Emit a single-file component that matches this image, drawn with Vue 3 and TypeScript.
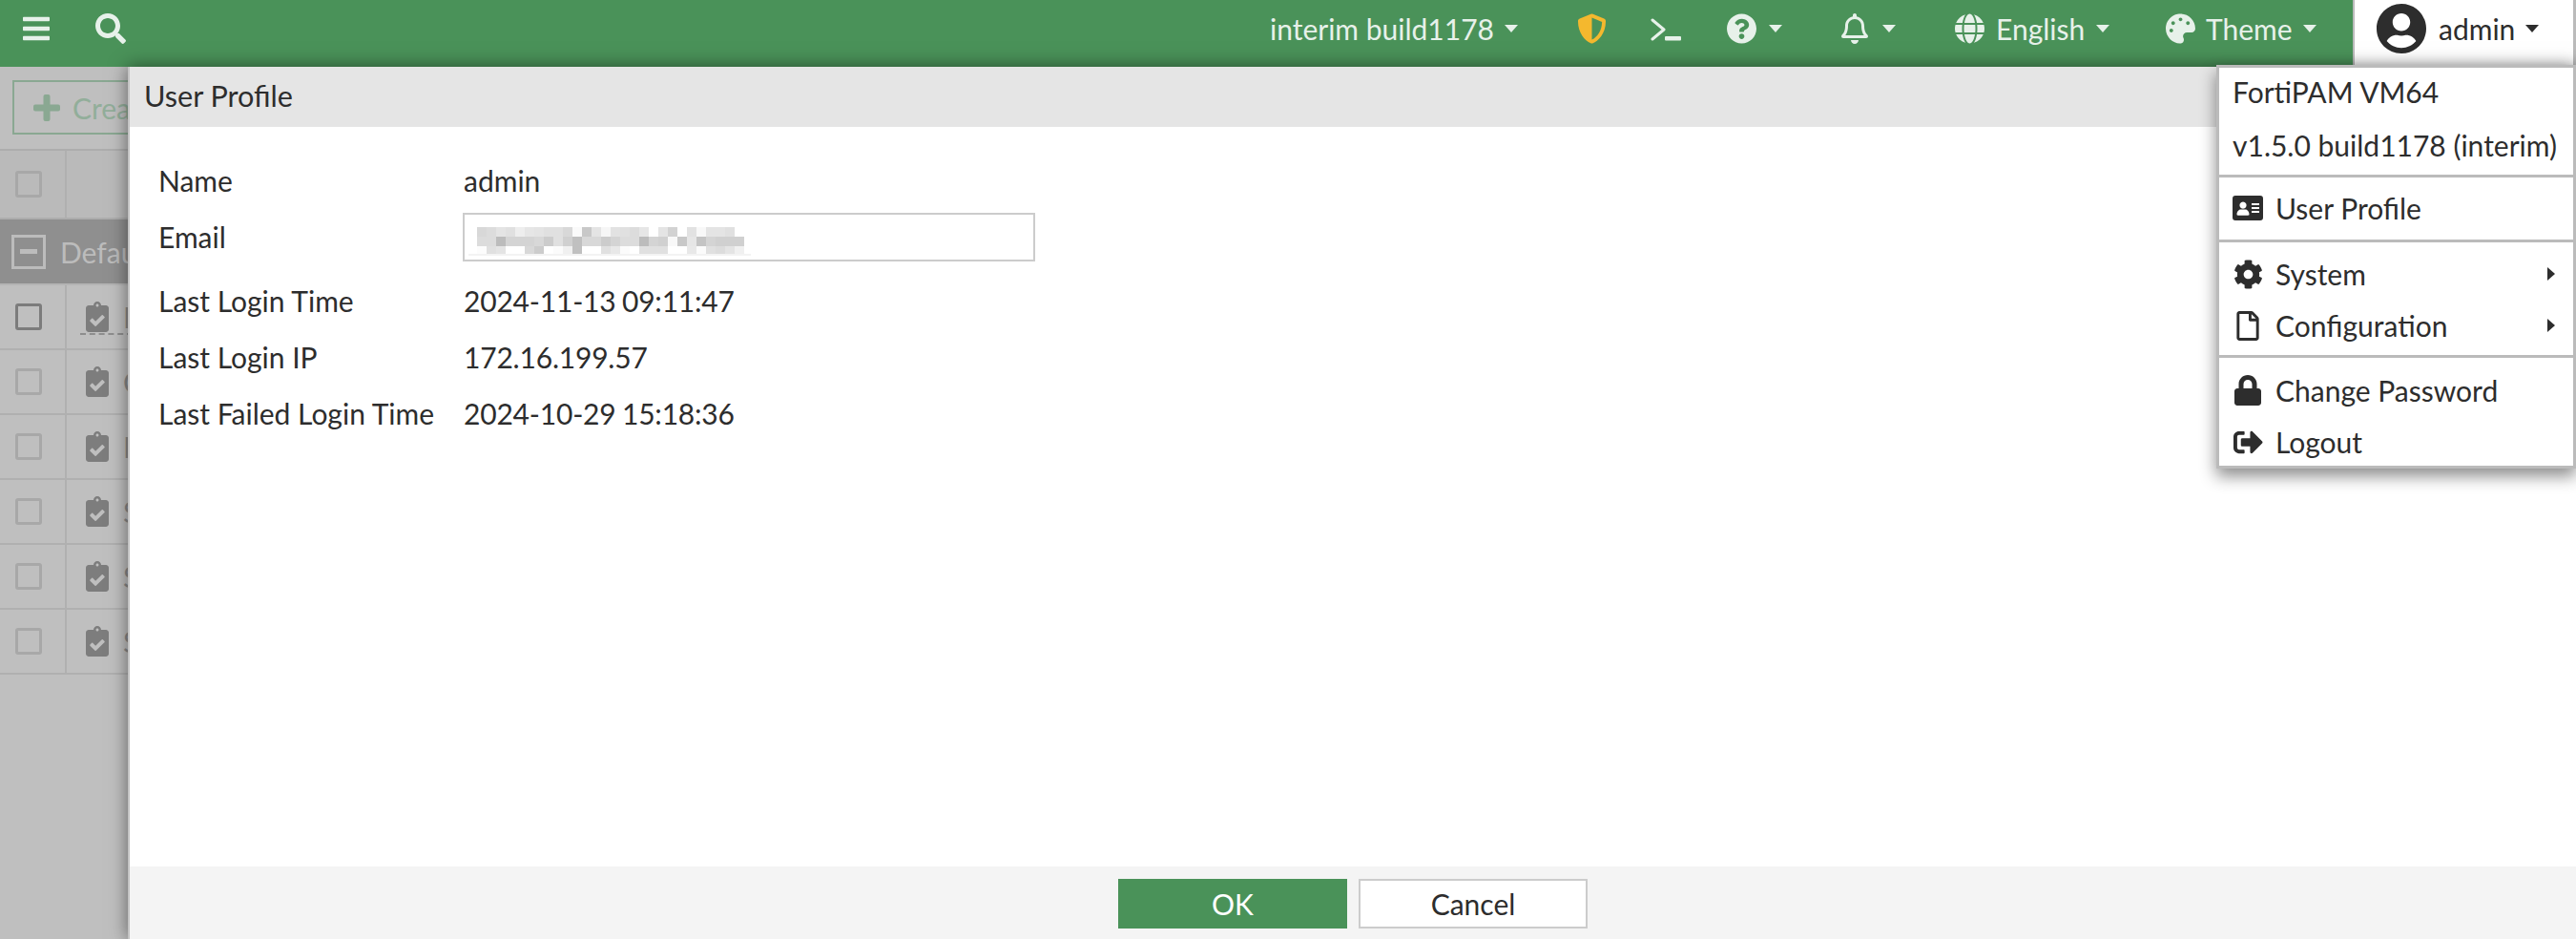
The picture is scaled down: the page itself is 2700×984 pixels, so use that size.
<script setup lang="ts">
const bgRows = [
  { t: 'Item', active: true },
  { t: 'Cert', active: false },
  { t: 'Host', active: false },
  { t: 'SSH', active: false },
  { t: 'SFTP', active: false },
  { t: 'SMB', active: false },
]
const infoTop = [{ k: 'Name', v: 'admin' }]
const infoBottom = [
  { k: 'Last Login Time', v: '2024-11-13 09:11:47' },
  { k: 'Last Login IP', v: '172.16.199.57' },
  { k: 'Last Failed Login Time', v: '2024-10-29 15:18:36' },
]
const blur: string[] = [
  'd8 dc e4 e0 ee e6 e4 e0 e0 d8 fa c8 e4 f6 e2 e0 dc e6 ff e4 d2 ff e2 f8 e4 e4 e0 ff',
  'dc dc bc d4 d4 d4 d8 cc e0 d0 c0 d8 d8 cc d4 dc dc bc d4 d0 f8 c8 e6 c4 d4 d0 d0 d0',
  'fc e0 e4 ff ff d8 cc ff fb f0 c0 ff ff e0 e8 fb ff e0 e0 e0 ff ff e8 fb e0 dc e4 f0',
]
const cells = blur.flatMap((r) => r.split(' ').map((c) => `#${c}${c}${c}`))
</script>

<template>
  <div class="page">
    <header class="topbar">
      <div class="tool tool-bars">
        <svg class="ic-bars" viewBox="0 0 448 512"><path d="M16 132h416c8.837 0 16-7.163 16-16V76c0-8.837-7.163-16-16-16H16C7.163 60 0 67.163 0 76v40c0 8.837 7.163 16 16 16zm0 160h416c8.837 0 16-7.163 16-16v-40c0-8.837-7.163-16-16-16H16c-8.837 0-16 7.163-16 16v40c0 8.837 7.163 16 16 16zm0 160h416c8.837 0 16-7.163 16-16v-40c0-8.837-7.163-16-16-16H16c-8.837 0-16 7.163-16 16v40c0 8.837 7.163 16 16 16z"/></svg>
      </div>
      <div class="tool tool-search">
        <svg class="ic-search" viewBox="0 0 512 512"><path d="M505 442.7L405.3 343c-4.5-4.5-10.6-7-17-7H372c27.6-35.3 44-79.7 44-128C416 93.1 322.9 0 208 0S0 93.1 0 208s93.1 208 208 208c48.3 0 92.7-16.4 128-44v16.3c0 6.4 2.5 12.5 7 17l99.7 99.7c9.4 9.4 24.6 9.4 33.9 0l28.3-28.3c9.4-9.4 9.4-24.6.1-34zM208 336c-70.7 0-128-57.2-128-128 0-70.7 57.2-128 128-128 70.7 0 128 57.2 128 128 0 70.7-57.2 128-128 128z"/></svg>
      </div>
      <div class="spacer"></div>
      <div class="cell w-build"><span>interim build1178</span><i class="caret"></i></div>
      <div class="cell w-shield">
        <svg class="ic-32 shield" viewBox="0 0 512 512"><path d="M466.5 83.7l-192-80a48.15 48.15 0 0 0-36.9 0l-192 80C27.7 91.1 16 108.6 16 128c0 198.5 114.5 335.7 221.5 380.3 11.8 4.9 25.1 4.9 36.9 0C360.1 472.6 496 349.3 496 128c0-19.4-11.700-36.900-29.500-44.300zM256.100 446.300l-.1-381 175.900 73.300c-3.300 151.400-82.100 261.100-175.800 307.700z"/></svg>
      </div>
      <div class="cell w-term">
        <svg class="ic-term" viewBox="0 0 32 24"><path fill="none" d="M2 2l12 10L2 22" stroke="currentColor" stroke-width="3" stroke-linecap="round" stroke-linejoin="round"/><rect x="15" y="19" width="17" height="4.500" rx="1"/></svg>
      </div>
      <div class="cell w-help">
        <svg class="ic-32" viewBox="8 8 496 496"><path d="M504 256c0 136.997-111.043 248-248 248S8 392.997 8 256C8 119.083 119.043 8 256 8s248 111.083 248 248zM262.655 90c-54.497 0-89.255 22.957-116.549 63.758-3.536 5.286-2.353 12.415 2.715 16.258l34.699 26.31c5.205 3.947 12.621 3.008 16.665-2.122 17.864-22.658 30.113-35.797 57.303-35.797 20.429 0 45.698 13.148 45.698 32.958 0 14.976-12.363 22.667-32.534 33.976C247.128 238.528 216 254.941 216 296v4c0 6.627 5.373 12 12 12h56c6.627 0 12-5.373 12-12v-1.333c0-28.462 83.186-29.647 83.186-106.667 0-58.002-60.165-102-116.531-102zM256 338c-25.365 0-46 20.635-46 46 0 25.364 20.635 46 46 46s46-20.636 46-46c0-25.365-20.635-46-46-46z"/></svg>
        <i class="caret"></i>
      </div>
      <div class="cell w-bell">
        <svg class="ic-bell" viewBox="0 0 448 512"><path d="M439.39 362.29c-19.32-20.76-55.47-51.99-55.47-154.29 0-77.7-54.48-139.9-127.94-155.16V32c0-17.67-14.32-32-31.98-32s-31.98 14.33-31.98 32v20.84C118.56 68.1 64.08 130.3 64.08 208c0 102.3-36.15 133.53-55.47 154.29-6 6.45-8.66 14.16-8.61 21.71.11 16.4 12.98 32 32.1 32h383.8c19.12 0 32-15.6 32.1-32 .05-7.55-2.61-15.27-8.61-21.71zM67.53 368c21.22-27.97 44.42-74.33 44.53-159.42 0-.2-.06-.38-.06-.58 0-61.86 50.14-112 112-112s112 50.14 112 112c0 .2-.06.38-.06.58.11 85.1 23.31 131.46 44.53 159.42H67.53zM224 512c35.32 0 63.97-28.65 63.97-64H160.03c0 35.35 28.65 64 63.97 64z"/></svg>
        <i class="caret"></i>
      </div>
      <div class="cell w-lang">
        <svg class="ic-32" viewBox="0 0 496 512"><path d="M336.5 160C322 70.7 287.8 8 248 8s-74 62.7-88.5 152h177zM152 256c0 22.2 1.2 43.5 3.3 64h185.3c2.1-20.5 3.3-41.8 3.3-64s-1.2-43.5-3.3-64H155.3c-2.1 20.5-3.3 41.8-3.3 64zm324.7-96c-28.6-67.9-86.5-120.4-158-141.6 24.4 33.8 41.2 84.7 50 141.6h108zM177.2 18.4C105.8 39.6 47.8 92.1 19.3 160h108c8.7-56.9 25.5-107.8 49.9-141.6zM487.4 192H372.7c2.1 21 3.3 42.5 3.3 64s-1.2 43-3.3 64h114.6c5.5-20.5 8.6-41.8 8.6-64s-3.1-43.5-8.5-64zM120 256c0-21.5 1.2-43 3.3-64H8.6C3.2 212.5 0 233.8 0 256s3.2 43.5 8.6 64h114.6c-2-21-3.2-42.5-3.2-64zm39.5 96c14.5 89.3 48.7 152 88.5 152s74-62.7 88.5-152h-177zm159.3 141.6c71.4-21.2 129.4-73.7 158-141.6h-108c-8.8 56.9-25.6 107.8-50 141.6zM19.3 352c28.6 67.9 86.5 120.4 158 141.6-24.4-33.8-41.2-84.7-50-141.6h-108z"/></svg>
        <span>English</span><i class="caret"></i>
      </div>
      <div class="cell w-theme">
        <svg class="ic-32" viewBox="0 0 512 512"><path d="M204.3 5C104.9 24.4 24.8 104.3 5.2 203.4c-37 187 131.7 326.4 258.8 306.7 41.2-6.4 61.4-54.6 42.5-91.7-23.1-45.4 9.9-98.4 60.9-98.4h79.7c35.8 0 64.8-29.6 64.9-65.3C511.5 97.1 368.1-26.9 204.3 5zM96 320c-17.7 0-32-14.3-32-32s14.3-32 32-32 32 14.3 32 32-14.3 32-32 32zm32-128c-17.7 0-32-14.3-32-32s14.3-32 32-32 32 14.3 32 32-14.3 32-32 32zm128-64c-17.7 0-32-14.3-32-32s14.3-32 32-32 32 14.3 32 32-14.3 32-32 32zm128 64c-17.7 0-32-14.3-32-32s14.3-32 32-32 32 14.3 32 32-14.3 32-32 32z"/></svg>
        <span>Theme</span><i class="caret"></i>
      </div>
      <div class="user">
        <svg class="avatar" viewBox="0 0 496 512"><path d="M248 8C111 8 0 119 0 256s111 248 248 248 248-111 248-248S385 8 248 8zm0 96c48.6 0 88 39.4 88 88s-39.4 88-88 88-88-39.4-88-88 39.4-88 88-88zm0 344c-58.7 0-111.3-26.6-146.5-68.2 18.8-35.4 55.6-59.8 98.5-59.8 2.4 0 4.8.4 7.1 1.1 13 4.2 26.6 6.9 40.9 6.9 14.3 0 28-2.7 40.9-6.9 2.3-.7 4.7-1.1 7.1-1.1 42.9 0 79.7 24.4 98.5 59.8C359.3 421.4 306.7 448 248 448z"/></svg>
        <span>admin</span><i class="caret dark"></i>
      </div>
    </header>

    <main class="under">
      <div class="toolbar">
        <div class="create">
          <svg class="ic-plus" viewBox="0 0 28 28"><rect x="10.5" width="7" height="28" rx="2"/><rect y="10.5" width="28" height="7" rx="2"/></svg>
          <span>Create</span>
        </div>
      </div>
      <div class="thead">
        <div class="cb-cell"><span class="cb"></span></div>
      </div>
      <div class="group">
        <span class="minus"><b></b></span>
        <span>Default</span>
      </div>
      <div v-for="r in bgRows" :key="r.t" class="row">
        <div class="cb-cell"><span class="cb" :class="{ on: r.active }"></span></div>
        <div class="row-main" :class="{ focus: r.active }">
          <svg class="ic-clip" viewBox="0 0 384 512"><path d="M336 64h-80c0-35.3-28.7-64-64-64s-64 28.7-64 64H48C21.5 64 0 85.5 0 112v352c0 26.5 21.5 48 48 48h288c26.5 0 48-21.5 48-48V112c0-26.5-21.5-48-48-48zM192 40c13.3 0 24 10.7 24 24s-10.7 24-24 24-24-10.7-24-24 10.7-24 24-24zm121.2 231.8l-143 141.8c-4.7 4.7-12.3 4.6-17-.1l-82.6-83.3c-4.7-4.7-4.6-12.3.1-17L99.1 285c4.7-4.7 12.3-4.6 17 .1l46 46.4 106-105.2c4.7-4.7 12.3-4.6 17 .1l28.2 28.4c4.7 4.8 4.6 12.3-.1 17z"/></svg>
          <span class="row-t">{{ r.t }}</span>
        </div>
      </div>
    </main>

    <section class="modal">
      <div class="modal-head">User Profile</div>
      <div class="modal-body">
        <div v-for="i in infoTop" :key="i.k" class="info"><label>{{ i.k }}</label><span>{{ i.v }}</span></div>
        <div class="info email">
          <label>Email</label>
          <div class="input">
            <div class="blur">
              <i v-for="(c, n) in cells" :key="n" :style="{ background: c }"></i>
            </div>
            <div class="blur-line"></div>
          </div>
        </div>
        <div v-for="i in infoBottom" :key="i.k" class="info"><label>{{ i.k }}</label><span class="val">{{ i.v }}</span></div>
      </div>
      <div class="modal-foot">
        <button class="btn ok">OK</button>
        <button class="btn cancel">Cancel</button>
      </div>
    </section>

    <nav class="menu">
      <div class="mi first">FortiPAM VM64</div>
      <div class="mi">v1.5.0 build1178 (interim)</div>
      <hr class="d1" />
      <div class="mi">
        <span class="mic"><svg class="m-id" viewBox="0 0 32 26"><path fill-rule="evenodd" d="M3 0h26a3 3 0 0 1 3 3v20a3 3 0 0 1-3 3H3a3 3 0 0 1-3-3V3a3 3 0 0 1 3-3zM11 6.500a3.600 3.600 0 1 0 .01 0zM4.500 19.500c0-3 2.500-5 4-5h5c1.500 0 4 2 4 5 0 .8-.5 1.200-1.200 1.200H5.700c-.7 0-1.200-.4-1.200-1.200zM20 8v2h8V8zM20 12v2h8v-2zM20 16v2h8v-2z"/></svg></span>User Profile
      </div>
      <hr class="d2" />
      <div class="mi">
        <span class="mic"><svg class="m-cog" viewBox="0 0 512 512"><path d="M487.4 315.7l-42.6-24.6c4.3-23.2 4.3-47 0-70.2l42.6-24.6c4.9-2.8 7.1-8.6 5.5-14-11.1-35.6-30-67.8-54.7-94.6-3.8-4.1-10-5.1-14.8-2.3L380.8 110c-17.9-15.4-38.5-27.3-60.8-35.1V25.8c0-5.6-3.9-10.5-9.4-11.7-36.7-8.2-74.3-7.8-109.2 0-5.5 1.2-9.4 6.1-9.4 11.7V75c-22.2 7.9-42.8 19.8-60.8 35.1L88.7 85.5c-4.9-2.8-11-1.9-14.8 2.3-24.7 26.7-43.6 58.9-54.7 94.6-1.7 5.4.6 11.2 5.5 14L67.3 221c-4.3 23.2-4.3 47 0 70.2l-42.6 24.6c-4.9 2.8-7.1 8.6-5.5 14 11.1 35.6 30 67.8 54.7 94.6 3.8 4.1 10 5.1 14.8 2.3l42.6-24.6c17.9 15.4 38.5 27.3 60.8 35.1v49.2c0 5.6 3.9 10.5 9.4 11.7 36.7 8.2 74.3 7.8 109.2 0 5.5-1.2 9.4-6.1 9.4-11.7v-49.2c22.2-7.9 42.8-19.8 60.8-35.1l42.6 24.6c4.9 2.8 11 1.9 14.8-2.3 24.7-26.7 43.6-58.9 54.7-94.6 1.5-5.5-.7-11.3-5.6-14.1zM256 336c-44.1 0-80-35.9-80-80s35.9-80 80-80 80 35.9 80 80-35.9 80-80 80z"/></svg></span>System<i class="arrow"></i>
      </div>
      <div class="mi">
        <span class="mic"><svg class="m-file" viewBox="0 0 384 512"><path d="M369.9 97.9L286 14C277 5 264.8-.1 252.1-.1H48C21.5 0 0 21.5 0 48v416c0 26.5 21.5 48 48 48h288c26.5 0 48-21.5 48-48V131.9c0-12.7-5.1-25-14.1-34zM332.1 128H256V51.9l76.1 76.1zM48 464V48h160v104c0 13.3 10.7 24 24 24h104v288H48z"/></svg></span>Configuration<i class="arrow"></i>
      </div>
      <hr class="d3" />
      <div class="mi">
        <span class="mic"><svg class="m-lock" viewBox="0 0 448 512"><path d="M400 224h-24v-72C376 68.2 307.8 0 224 0S72 68.2 72 152v72H48c-26.5 0-48 21.5-48 48v192c0 26.5 21.5 48 48 48h352c26.5 0 48-21.5 48-48V272c0-26.5-21.5-48-48-48zm-104 0H152v-72c0-39.7 32.3-72 72-72s72 32.3 72 72v72z"/></svg></span>Change Password
      </div>
      <div class="mi">
        <span class="mic"><svg class="m-out" viewBox="0 0 512 512"><path d="M497 273L329 441c-15 15-41 4.500-41-17v-96H152c-13.300 0-24-10.700-24-24v-96c0-13.300 10.700-24 24-24h136V88c0-21.400 25.900-32 41-17l168 168c9.300 9.400 9.300 24.600 0 34zM192 436v-40c0-6.600-5.400-12-12-12H96c-17.700 0-32-14.300-32-32V160c0-17.700 14.300-32 32-32h84c6.600 0 12-5.400 12-12V76c0-6.600-5.400-12-12-12H96c-53 0-96 43-96 96v192c0 53 43 96 96 96h84c6.600 0 12-5.400 12-12z"/></svg></span>Logout
      </div>
    </nav>
  </div>
</template>

<style>
html, body { margin: 0; overflow: hidden; }
</style>

<style scoped>
* { box-sizing: border-box; }
.page {
  position: relative;
  width: 2700px;
  height: 984px;
  overflow: hidden;
  background: #bfbfbf;
  font-family: Lato, "Liberation Sans", sans-serif;
  font-size: 30px;
  color: #2d2d2d;
}
svg { fill: currentColor; display: block; flex: none; }

.topbar {
  display: flex;
  align-items: center;
  height: 70px;
  background: #4a9259;
  color: #e7f1ea;
  font-size: 30px;
}
.tool-bars { width: 100px; padding-left: 24px; }
.tool-search { width: 34px; }
.ic-bars { width: 28px; height: 32px; margin-top: -10px; }
.ic-search { width: 32px; height: 32px; margin-top: -10px; }
.spacer { flex: 1; }
.cell {
  display: flex;
  align-items: center;
  height: 70px;
  padding-bottom: 11px;
}
.w-build { width: 322px; gap: 11px; }
.w-shield { width: 77px; }
.w-term { width: 80px; }
.w-help { width: 120px; gap: 13px; }
.w-bell { width: 119px; gap: 15px; }
.w-lang { width: 221px; gap: 12px; }
.w-theme { width: 196px; gap: 11px; }
.ic-32 { width: 31px; height: 32px; }
.shield { color: #f4b82e; }
.ic-term { width: 32px; height: 24px; margin-top: 2px; }
.ic-bell { width: 28px; height: 32px; }
.caret {
  display: block;
  width: 0;
  height: 0;
  border-left: 7px solid transparent;
  border-right: 7px solid transparent;
  border-top: 8px solid currentColor;
}
.caret.dark { color: #2d2d2d; }
.user {
  display: flex;
  align-items: center;
  gap: 13px;
  width: 234px;
  height: 70px;
  padding: 0 0 10px 23px;
  background: #fff;
  color: #2d2d2d;
  border-left: 2px solid #bbb;
  border-right: 3px solid #bbb;
}
.avatar { width: 52px; height: 54px; }
.user .caret { margin-left: -2px; }

.under { width: 136px; overflow: hidden; color: #8a8a8a; }
.toolbar {
  height: 88px;
  padding: 14px 0 0 13px;
  border-bottom: 2px solid #adadad;
}
.create {
  display: flex;
  align-items: center;
  gap: 13px;
  width: 260px;
  height: 57px;
  padding-left: 20px;
  border: 2px solid #8aa892;
  color: #92ae9a;
  font-size: 30px;
}
.ic-plus { width: 28px; height: 28px; color: #8aa892; }
.thead {
  display: flex;
  height: 72px;
  border-bottom: 2px solid #adadad;
  background: #bababa;
}
.cb-cell {
  display: flex;
  align-items: center;
  width: 70px;
  flex: none;
  padding-left: 16px;
  border-right: 2px solid #b0b0b0;
}
.cb {
  display: block;
  width: 28px;
  height: 28px;
  border: 3px solid #a8a8a8;
  border-radius: 3px;
}
.cb.on { border-color: #7c7c7c; }
.group {
  display: flex;
  align-items: center;
  gap: 15px;
  height: 69px;
  padding-left: 12px;
  background: #8f8f8f;
  border-bottom: 2px solid #b4b4b4;
  color: #bcbcbc;
  font-size: 30px;
}
.minus {
  display: flex;
  align-items: center;
  justify-content: center;
  flex: none;
  width: 36px;
  height: 36px;
  border: 3px solid #bcbcbc;
}
.minus b { display: block; width: 18px; height: 5px; background: #bcbcbc; }
.row {
  display: flex;
  height: 68px;
  border-bottom: 2px solid #b0b0b0;
}
.row-main {
  position: relative;
  display: flex;
  align-items: center;
  gap: 15px;
  padding-left: 20px;
  flex: 1;
}
.row-main.focus::after {
  content: "";
  position: absolute;
  left: 14px;
  right: 0;
  bottom: 14px;
  border-bottom: 2px dashed #8e8e8e;
}
.ic-clip { width: 24px; height: 32px; color: #7d7d7d; }
.row-t { font-size: 30px; color: #888; }

.modal {
  position: absolute;
  left: 134px;
  top: 70px;
  right: 0;
  bottom: 0;
  display: flex;
  flex-direction: column;
  background: #fff;
  border-left: 2px solid #c4c4c4;
  box-shadow: 0 0 18px rgba(0, 0, 0, 0.5);
}
.modal-head {
  display: flex;
  align-items: center;
  height: 63px;
  padding: 0 0 2px 15px;
  background: #e5e5e5;
  font-size: 30.6px;
}
.modal-body {
  flex: 1;
  padding: 26px 0 0 30px;
}
.info {
  display: flex;
  align-items: center;
  height: 59px;
}
.info label { width: 320px; flex: none; }
.val { letter-spacing: -0.2px; word-spacing: -1px; }
.email { margin-bottom: 8px; }
.input {
  position: relative;
  width: 600px;
  height: 51px;
  margin-top: 2px;
  margin-left: -1px;
  border: 2px solid #ccc;
  padding: 13px 0 0 13px;
}
.blur {
  display: grid;
  grid-template-columns: repeat(28, 10px);
  grid-auto-rows: 10px;
}
.blur i { display: block; }
.blur-line {
  position: absolute;
  left: 4px;
  bottom: 4px;
  width: 296px;
  height: 2px;
  background: #f3f3f3;
}
.modal-foot {
  display: flex;
  justify-content: center;
  gap: 12px;
  height: 76px;
  padding: 13px 0 0 0;
  background: #f4f4f4;
}
.btn {
  width: 240px;
  height: 52px;
  padding: 0;
  font: inherit;
  border-radius: 0;
}
.ok { background: #4a9259; border: 0; color: #fff; }
.cancel { background: #fff; border: 2px solid #ccc; color: #2d2d2d; }

.menu {
  position: absolute;
  top: 68px;
  right: 0;
  width: 377px;
  height: 423px;
  overflow: hidden;
  background: #fff;
  border: 3px solid #bbb;
  box-shadow: 0 8px 16px rgba(0, 0, 0, 0.45);
}
.mi {
  position: relative;
  display: flex;
  align-items: center;
  height: 54px;
  padding-left: 14px;
  white-space: nowrap;
}
.mi.first { margin-top: -2px; margin-bottom: 2px; }
.menu hr {
  height: 3px;
  margin: 0;
  border: 0;
  background: #bbb;
}
.d1 { margin-top: 4px !important; margin-bottom: 5px !important; }
.d2 { margin-top: 6px !important; margin-bottom: 6px !important; }
.d3 { margin-top: 4px !important; margin-bottom: 7px !important; }
.mic {
  display: flex;
  justify-content: center;
  width: 32px;
  margin-right: 13px;
}
.m-id { width: 32px; height: 26px; }
.m-cog { width: 31px; height: 31px; }
.m-file { width: 24px; height: 31px; }
.m-lock { width: 28px; height: 32px; }
.m-out { width: 31px; height: 31px; }
.arrow {
  position: absolute;
  right: 19px;
  top: 20px;
  width: 0;
  height: 0;
  border-top: 7px solid transparent;
  border-bottom: 7px solid transparent;
  border-left: 8px solid #2d2d2d;
}
</style>
